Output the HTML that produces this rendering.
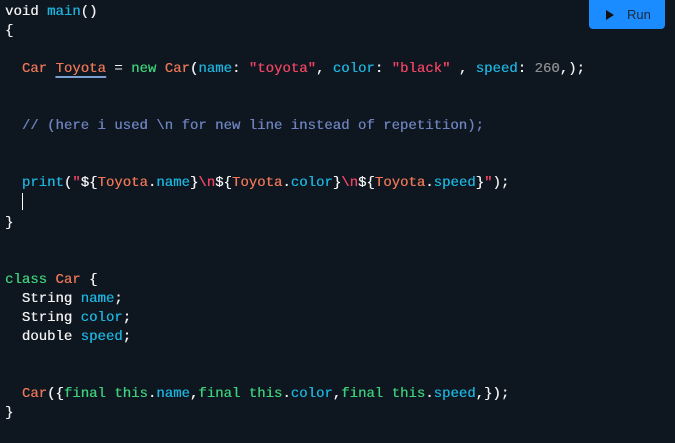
<!DOCTYPE html><html><head><style>
body{margin:0;background:#0e1620;width:675px;height:443px;overflow:hidden;position:relative}
pre{margin:0;position:absolute;left:5px;top:3px;font:14px/19px "Liberation Mono",monospace;color:#f0f0f0;text-shadow:0.3px 0 0 currentColor}
.t{color:#1cb3dc}.o{color:#ec7656}.g{color:#3dd07a}.s{color:#ee4463}.c{color:#6d82bd}.n{color:#8c8c8c}
.u{text-decoration:underline;text-decoration-color:#7aa0d0;text-underline-offset:4px;text-decoration-thickness:2px}
.cur{display:inline-block;width:1px;height:17px;background:#fff;vertical-align:-3px}
.run{position:absolute;left:589px;top:0;width:76px;height:29px;background:#1a8cff;border-radius:0 0 4px 4px;color:#1b2a3a;font:13px "Liberation Sans",sans-serif;line-height:29px}
.run .tri{position:absolute;left:17px;top:10px;width:0;height:0;border-left:8px solid #111;border-top:5px solid transparent;border-bottom:5px solid transparent}
.run span{position:absolute;left:38px}
</style></head><body>
<pre>void <span class="t">main</span>()
{

  <span class="o">Car</span> <span class="o u">Toyota</span> = <span class="g">new</span> <span class="o">Car</span>(<span class="t">name</span>: <span class="s">"toyota"</span>, <span class="t">color</span>: <span class="s">"black"</span> , <span class="t">speed</span>: <span class="n">260</span>,);


  <span class="c">// (here i used \n for new line instead of repetition);</span>


  <span class="t">print</span>(<span class="s">"</span>${<span class="o">Toyota</span>.<span class="t">name</span>}<span class="s">\n</span>${<span class="o">Toyota</span>.<span class="t">color</span>}<span class="s">\n</span>${<span class="o">Toyota</span>.<span class="t">speed</span>}<span class="s">"</span>);
  <span class="cur"></span>
}


<span class="g">class</span> <span class="o">Car</span> {
  String <span class="t">name</span>;
  String <span class="t">color</span>;
  double <span class="t">speed</span>;


  <span class="o">Car</span>({<span class="g">final</span> <span class="g">this</span>.<span class="t">name</span>,<span class="g">final</span> <span class="g">this</span>.<span class="t">color</span>,<span class="g">final</span> <span class="g">this</span>.<span class="t">speed</span>,});
}</pre>
<div class="run"><div class="tri"></div><span>Run</span></div>
</body></html>
